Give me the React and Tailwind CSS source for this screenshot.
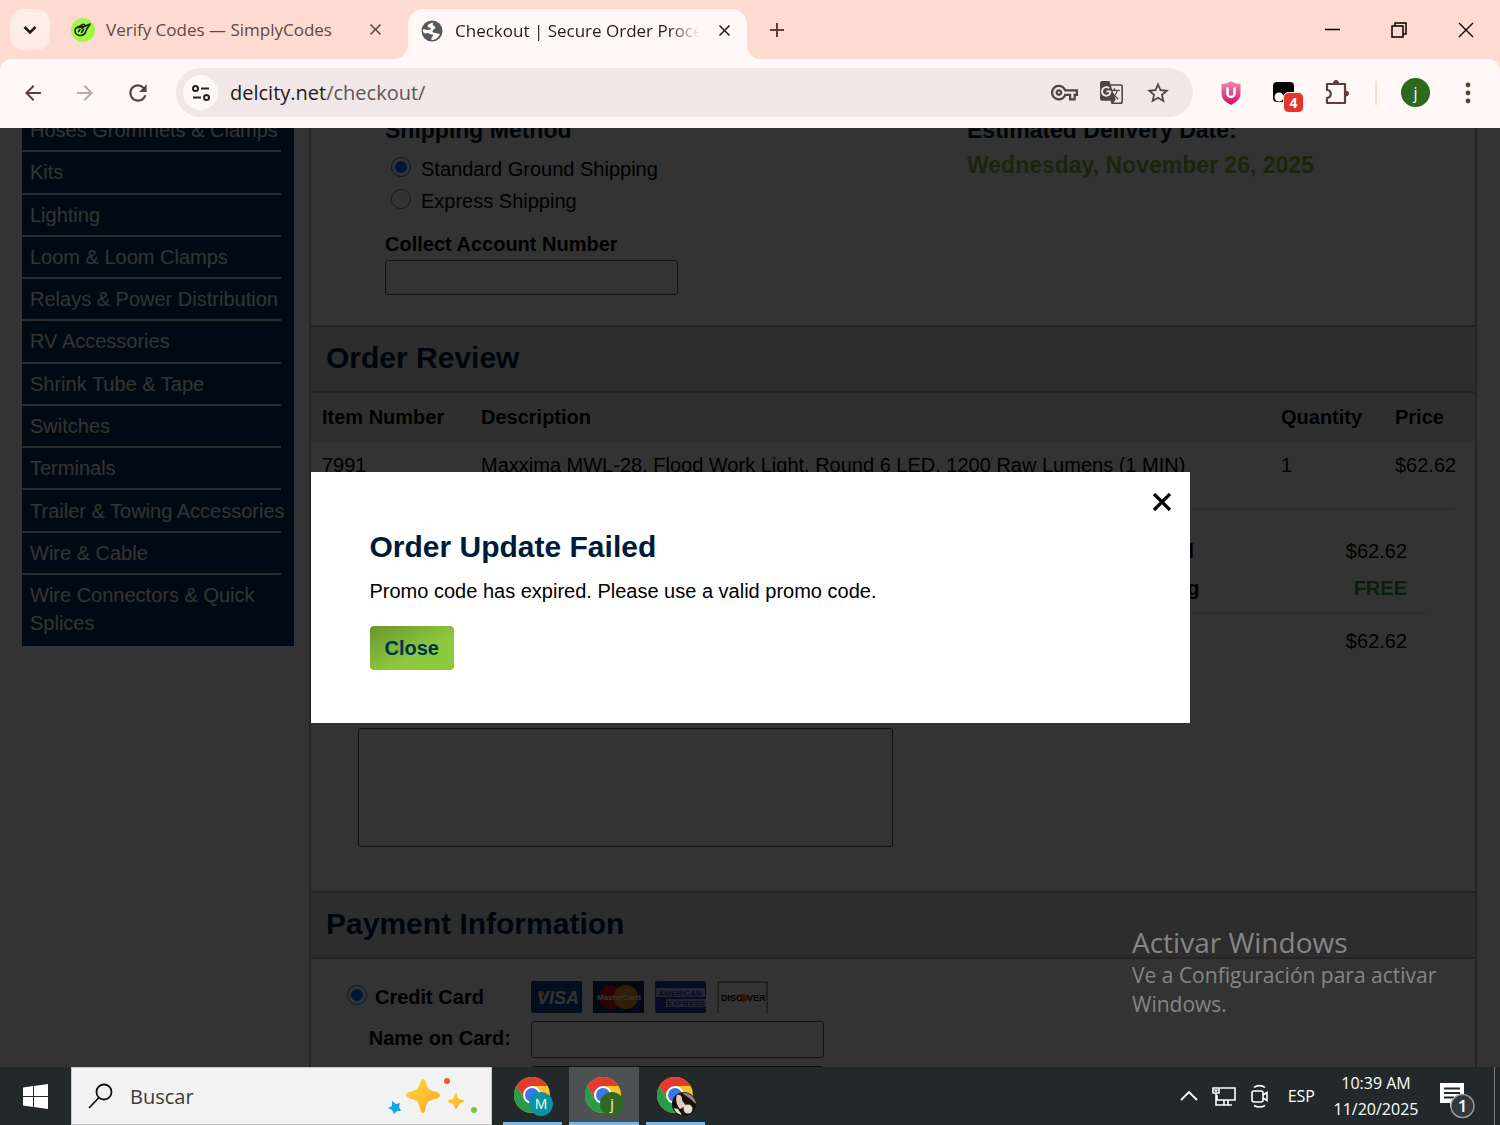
import React from "react";
import {
    MdAdd,
    MdArrowBack,
    MdArrowForward,
    MdClose,
    MdGTranslate,
    MdOutlineVpnKey,
    MdRefresh,
    MdStarBorder,
} from "react-icons/md";

const categories = [
    "Hoses Grommets & Clamps",
    "Kits",
    "Lighting",
    "Loom & Loom Clamps",
    "Relays & Power Distribution",
    "RV Accessories",
    "Shrink Tube & Tape",
    "Switches",
    "Terminals",
    "Trailer & Towing Accessories",
    "Wire & Cable",
];

function TabFlare({ flip }) {
    return (
        <svg
            className={`h-[14px] w-[14px] self-end text-[#fff8f6] ${flip ? "-scale-x-100" : ""}`}
            viewBox="0 0 14 14"
            fill="currentColor"
        >
            <path d="M14 0v14H0A14 14 0 0 0 14 0z" />
        </svg>
    );
}

function TabStrip() {
    return (
        <div className="flex h-[59px] items-center bg-[#ffdad0] text-[17px]">
            <button
                aria-label="Search tabs"
                className="ml-[10px] flex h-[41px] w-10 items-center justify-center rounded-[14px] bg-[#ffece6]"
            >
                <svg className="h-4 w-4" viewBox="0 0 16 16" fill="none" stroke="#1a1a1a" strokeWidth="2.600">
                    <path d="M2.500 5l5.500 5.500L13.500 5" />
                </svg>
            </button>

            <div className="ml-[21px] flex w-[323px] items-center text-[#5c4a45]">
                <svg className="h-6 w-6" viewBox="0 0 24 24" fill="none">
                    <circle cx="12" cy="12" r="12" fill="#a5f545" />
                    <g stroke="#12240a" strokeWidth="1.600" strokeLinejoin="round" strokeLinecap="round">
                        <path d="M5 10l7-3.500c1.500-.7 2.500 1 1.500 2L11 10.500M13.500 8.500L19 6l-3.500 5.500c-1 4-3 6-6 6C6.500 17.500 4 15.500 4 12.500c0-1 .3-1.800 1-2.500z" />
                        <path d="M9 11.500l-1.500 2M12.500 11.500l-2 3" />
                    </g>
                </svg>
                <span className="ml-[11px] flex-1 whitespace-nowrap">Verify Codes — SimplyCodes</span>
                <button aria-label="Close tab" className="mr-[9px]">
                    <MdClose className="h-[19px] w-[19px]" />
                </button>
            </div>

            <TabFlare />
            <div className="flex h-[50px] w-[339px] items-center self-end rounded-t-[15px] bg-[#fff8f6] pb-[7px] text-[#241d1b]">
                <svg className="ml-[13px] h-[22px] w-[22px]" viewBox="0 0 22 22">
                    <circle cx="11" cy="11" r="10.500" fill="#54585c" />
                    <path
                        d="M12.500 2.500c-3 .5-6 2-6 4 0 1.500 2 1 3 1.500 1 1-1 2-3 2-2 0-3-1-4.500-.5C1.500 12 2.500 13 4 13.500c1.500 0 2.500-1 4 0 1 .7 2 1 3.500 1 1.500.3.500 1.500-.5 2.500-.5 1-1 2-.5 3 4 .2 7-2.500 8.500-6-1.500 0-2.500-1-4-1s-3.500 0-3.500-1.500S13 9 14 8.500c1-.7 0-2-1-2.500s-2-2-.5-3.500z"
                        fill="#fff8f6"
                    />
                </svg>
                <span className="ml-[12px] w-[244px] overflow-hidden whitespace-nowrap [mask-image:linear-gradient(to_right,black_88%,transparent)]">
                    Checkout | Secure Order Processing
                </span>
                <button aria-label="Close tab" className="ml-4">
                    <MdClose className="h-[19px] w-[19px]" />
                </button>
            </div>
            <TabFlare flip />
            <button aria-label="New tab" className="ml-1 text-[#5c4038]">
                <MdAdd className="h-6 w-6" />
            </button>

            <div className="ml-auto mr-px flex text-black">
                <button aria-label="Minimize" className="flex w-[67px] justify-center">
                    <svg className="h-4 w-4" viewBox="0 0 16 16" fill="none" stroke="currentColor">
                        <path d="M1 7.500h15" strokeWidth="1.500" />
                    </svg>
                </button>
                <button aria-label="Restore" className="flex w-[67px] justify-center">
                    <svg className="h-4 w-4" viewBox="0 0 16 16" fill="none" stroke="currentColor" strokeWidth="1.500">
                        <path d="M1 4h11v11H1zM4 4V1h11v11h-3" />
                    </svg>
                </button>
                <button aria-label="Close window" className="flex w-[67px] justify-center">
                    <svg className="h-4 w-4" viewBox="0 0 16 16" fill="none" stroke="currentColor" strokeWidth="1.300">
                        <path d="M1 1l14 14M15 1L1 15" />
                    </svg>
                </button>
            </div>
        </div>
    );
}

function Toolbar() {
    return (
        <div className="bg-[#ffdad0]">
            <div className="flex h-[69px] items-center rounded-t-xl bg-[#fff8f6] pb-[2px] pl-[21px] pr-5 text-[#5c4038]">
                <div className="mr-[25px] flex items-center gap-7">
                    <button aria-label="Back">
                        <MdArrowBack className="h-6 w-6" />
                    </button>
                    <button aria-label="Forward" className="text-[#b5aca9]">
                        <MdArrowForward className="h-6 w-6" />
                    </button>
                    <button aria-label="Reload">
                        <MdRefresh className="h-[26px] w-[26px]" />
                    </button>
                </div>

                <div className="flex h-[49px] flex-1 items-center rounded-full bg-[#f1e6e8] pl-[7px] pr-[22px] text-[#4d4444]">
                    <button
                        aria-label="Site information"
                        className="flex h-[35px] w-[35px] items-center justify-center rounded-full bg-[#fff8f6]"
                    >
                        <svg className="h-5 w-5" viewBox="0 0 20 20" fill="none" stroke="#222" strokeWidth="2">
                            <circle cx="4.500" cy="5.500" r="2.500" />
                            <path d="M10 5.500h8M2 14.500h8" />
                            <circle cx="15.500" cy="14.500" r="2.500" />
                        </svg>
                    </button>
                    <p className="ml-3 flex-1 text-[20px] text-[#5e5557]">
                        <span className="text-[#1f1a1a]">delcity.net</span>/checkout/
                    </p>
                    <div className="flex items-center gap-[21px]">
                        <button aria-label="Passwords">
                            <MdOutlineVpnKey className="h-[27px] w-[27px]" />
                        </button>
                        <button aria-label="Translate this page">
                            <MdGTranslate className="h-[25px] w-[25px]" />
                        </button>
                        <button aria-label="Bookmark this page">
                            <MdStarBorder className="h-[26px] w-[26px]" />
                        </button>
                    </div>
                </div>

                <button aria-label="Ad blocker" className="ml-[11px] flex w-[53px] justify-center">
                    <svg className="h-6 w-5" viewBox="0 0 20 24">
                        <defs>
                            <linearGradient id="shield" x1="0" y1="0" x2="0" y2="1">
                                <stop offset="0" stopColor="#f48bb5" />
                                <stop offset="1" stopColor="#c9105f" />
                            </linearGradient>
                        </defs>
                        <path d="M10 0c3 2 6 3 9.500 3v9c0 6-4 9-9.500 12C4.500 21 .5 18 .5 12V3C4 3 7 2 10 0z" fill="url(#shield)" />
                        <path d="M6.500 6.500v6a3.500 3.500 0 0 0 7 0v-6" fill="none" stroke="#fff" strokeWidth="2.500" />
                    </svg>
                </button>
                <button aria-label="User scripts" className="flex w-[53px] justify-center pl-[10px]">
                    <svg className="h-[42px] w-8" viewBox="0 0 32 42">
                        <rect x="0" y="10" width="21" height="20" rx="4" fill="#000" />
                        <circle cx="6" cy="25" r="4.500" fill="#fff" />
                        <circle cx="16" cy="25" r="4.500" fill="#fff" />
                        <rect x="10.500" y="20.500" width="20" height="20" rx="5" fill="#e8322f" stroke="#fff8f6" />
                        <text
                            x="20.500"
                            y="36"
                            textAnchor="middle"
                            fill="#fff"
                            className="font-['Open_Sans',sans-serif] text-[14px] font-bold"
                        >
                            4
                        </text>
                    </svg>
                </button>
                <button aria-label="Extensions" className="flex w-[53px] justify-center">
                    <svg className="h-[26px] w-[26px]" viewBox="0 0 26 26" fill="none" stroke="currentColor" strokeWidth="2.200" strokeLinejoin="round">
                        <path d="M3 4h18v19H3v-5c5-.5 5-7.500 0-8z" />
                        <path d="M9.500 3a2.500 2.500 0 0 1 5 0zM22 11a2.500 2.500 0 0 1 0 5z" fill="currentColor" strokeWidth="1" />
                    </svg>
                </button>
                <span className="ml-3 h-6 w-[2px] bg-[#ffdad0]" />
                <button
                    aria-label="Profile"
                    className="ml-6 flex h-[29px] w-[29px] items-center justify-center rounded-full bg-[#2b6a1c] text-[16px] leading-none text-white"
                >
                    j
                </button>
                <button aria-label="Menu" className="ml-[26px]">
                    <svg className="h-6 w-6" viewBox="0 0 24 24" fill="currentColor">
                        <circle cx="12" cy="4" r="2.400" />
                        <circle cx="12" cy="12" r="2.400" />
                        <circle cx="12" cy="20" r="2.400" />
                    </svg>
                </button>
            </div>
        </div>
    );
}

function Sidebar() {
    return (
        <nav className="w-[272px] flex-none bg-[#003366] text-white">
            <ul className="flex h-[536px] flex-col">
                {categories.map((name) => (
                    <li key={name} className="mr-[13px] flex flex-1 items-center whitespace-nowrap border-b-2 border-white/80 pl-2">
                        <a href="#">{name}</a>
                    </li>
                ))}
                <li className="h-[71px] pl-2 pr-5 pt-[6px]">
                    <a href="#">Wire Connectors & Quick Splices</a>
                </li>
            </ul>
        </nav>
    );
}

function SectionHeader({ children }) {
    return (
        <h2 className="flex h-[68px] items-center border-y-2 border-[#bbb] bg-[#e1e1e1] px-[15px] pb-[2px] text-[30px] font-bold text-[#002147]">
            {children}
        </h2>
    );
}

function Shipping() {
    return (
        <section className="flex pb-[30px] pl-[74px] pt-[6px]">
            <div className="w-[582px]">
                <h3 className="text-[23px] font-bold text-[#001a33]">Shipping Method</h3>
                <div className="mt-[9px] flex flex-col pl-[6px]">
                    <label className="flex h-8 items-center">
                        <input type="radio" name="ship" defaultChecked className="mb-1 mr-[10px] h-5 w-5" />
                        Standard Ground Shipping
                    </label>
                    <label className="flex h-8 items-center">
                        <input type="radio" name="ship" className="mb-1 mr-[10px] h-5 w-5" />
                        Express Shipping
                    </label>
                </div>
                <label htmlFor="account" className="mt-[13px] block font-bold">
                    Collect Account Number
                </label>
                <input
                    id="account"
                    className="mt-[2px] block h-[35px] w-[293px] rounded-[3px] border border-[#555] bg-white px-2"
                />
            </div>
            <div className="text-[23px] font-bold">
                <h3 className="text-[#001a33]">Estimated Delivery Date:</h3>
                <p className="mt-[7px] text-[#84bb3c]">Wednesday, November 26, 2025</p>
            </div>
        </section>
    );
}

function OrderReview() {
    return (
        <section>
            <SectionHeader>Order Review</SectionHeader>
            <table className="w-full text-left">
                <thead className="bg-[#ebebeb]">
                    <tr className="h-[49px]">
                        <th className="w-[170px] pb-[2px] pl-[11px]">Item Number</th>
                        <th className="pb-[2px]">Description</th>
                        <th className="w-[114px] pb-[2px]">Quantity</th>
                        <th className="w-[80px] pb-[2px]">Price</th>
                    </tr>
                </thead>
                <tbody>
                    <tr className="h-[66px] align-top">
                        <td className="pl-[11px] pt-[9px]">7991</td>
                        <td className="pt-[9px]">Maxxima MWL-28, Flood Work Light, Round 6 LED, 1200 Raw Lumens (1 MIN)</td>
                        <td className="pt-[9px]">1</td>
                        <td className="pt-[9px]">$62.62</td>
                    </tr>
                </tbody>
            </table>
            <hr className="mx-5 border-t-2 border-[#e6e6e6]" />

            <dl className="ml-auto mr-[48px] mt-[22px] w-[337px]">
                <div className="flex h-[37px] items-center justify-between pl-6 pr-5">
                    <dt className="font-bold">Subtotal</dt>
                    <dd>$62.62</dd>
                </div>
                <div className="flex h-[37px] items-center justify-between pl-6 pr-5">
                    <dt className="font-bold">Shipping</dt>
                    <dd className="font-bold text-[#32963e]">FREE</dd>
                </div>
                <div className="mt-[6px] flex h-[49px] items-end justify-between border-t-2 border-[#e6e6e6] pb-[6px] pl-6 pr-5">
                    <dt className="font-bold">Total</dt>
                    <dd>$62.62</dd>
                </div>
            </dl>

            <textarea
                aria-label="Order comments"
                className="mb-11 ml-[47px] mt-[67px] block h-[119px] w-[535px] resize-none rounded-[3px] border border-[#555] bg-white"
            />
        </section>
    );
}

function CardLogos() {
    return (
        <div className="flex gap-[11px]">
            <svg className="h-8 w-[51px]" viewBox="0 0 51 32">
                <rect width="51" height="32" rx="2" fill="#12479b" />
                <text x="27" y="23" textAnchor="middle" fill="#fff" className="text-[18px] font-bold italic">
                    VISA
                </text>
                <path d="M7 10h5l2 6z" fill="#e8b64a" />
            </svg>
            <svg className="h-8 w-[51px]" viewBox="0 0 51 32">
                <rect width="51" height="32" fill="#0d2c66" />
                <circle cx="18" cy="16" r="12" fill="#e0131e" />
                <circle cx="33" cy="16" r="12" fill="#f59b1c" />
                <text x="26" y="19" textAnchor="middle" fill="#fff" className="text-[8px] font-bold">
                    MasterCard
                </text>
            </svg>
            <svg className="h-8 w-[51px]" viewBox="0 0 51 32">
                <rect width="51" height="32" rx="2" fill="#1f3fc4" />
                <rect x="1" y="7" width="49" height="9" fill="#b9c4ee" />
                <rect x="11" y="18" width="40" height="8" fill="#b9c4ee" />
                <text x="25" y="15" textAnchor="middle" fill="#1f3fc4" className="text-[8px] font-bold">
                    AMERICAN
                </text>
                <text x="31" y="25" textAnchor="middle" fill="#1f3fc4" className="text-[8px] font-bold">
                    EXPRESS
                </text>
            </svg>
            <svg className="h-8 w-[51px]" viewBox="0 0 51 32">
                <path d="M1 32V1h49v31" fill="#fff" stroke="#8a8a8a" strokeWidth="1.500" />
                <circle cx="27" cy="17" r="4" fill="#f08020" />
                <text x="4" y="20" fill="#000" className="text-[9px] font-bold">
                    DISC
                </text>
                <text x="30" y="20" fill="#000" className="text-[9px] font-bold">
                    VER
                </text>
            </svg>
        </div>
    );
}

function Payment() {
    return (
        <section>
            <SectionHeader>Payment Information</SectionHeader>
            <div className="grid grid-cols-[200px_293px] gap-x-5 pt-[22px] font-bold">
                <label className="flex h-[32px] items-center pl-9">
                    <input type="radio" name="pay" defaultChecked className="mb-1 mr-2 h-5 w-5" />
                    Credit Card
                </label>
                <CardLogos />
                <label htmlFor="holder" className="mt-2 flex h-[37px] items-center justify-end pb-1">
                    Name on Card:
                </label>
                <input id="holder" className="mt-2 h-[37px] rounded-[3px] border border-[#555] bg-white px-2" />
                <span />
                <input aria-label="Card number" className="mt-2 h-[37px] rounded-[3px] border border-[#555] bg-white px-2" />
            </div>
        </section>
    );
}

function FailedDialog() {
    return (
        <div className="absolute inset-0 flex items-center justify-center bg-black/80">
            <div role="dialog" aria-labelledby="failed-title" className="w-[879px] max-w-full bg-white pb-[53px] pt-4">
                <div className="flex justify-end pr-[15px]">
                    <button aria-label="Close dialog">
                        <svg className="h-[26px] w-[26px]" viewBox="0 0 26 26" stroke="#000" strokeWidth="3.200">
                            <path d="M5 6l16 16M21 6L5 22" />
                        </svg>
                    </button>
                </div>
                <div className="px-[59px] pt-[13px]">
                    <h2 id="failed-title" className="text-[30px] font-bold leading-10 text-[#001a3a]">
                        Order Update Failed
                    </h2>
                    <p className="mt-[10px]">Promo code has expired. Please use a valid promo code.</p>
                    <button className="mt-[21px] h-11 rounded-[4px] bg-linear-to-br from-[#6b942f] to-[#8dc93e] to-60% px-[15px] font-bold text-[#003350]">
                        Close
                    </button>
                </div>
            </div>
        </div>
    );
}

function ChromeIcon({ children }) {
    return (
        <svg className="ml-[2px] mt-1 h-10 w-10" viewBox="0 0 40 40">
            <circle cx="18" cy="18" r="18" fill="#f9c32c" />
            <path d="M18 9h15.600A18 18 0 0 0 2.400 9l7.800 13.500z" fill="#e33b2e" />
            <path d="M2.400 9A18 18 0 0 0 18 36l7.800-13.500L18 27l-7.800-4.500z" fill="#2a9b48" />
            <circle cx="18" cy="18" r="9" fill="#fff" />
            <circle cx="18" cy="18" r="7" fill="#3b78e7" />
            {children}
        </svg>
    );
}

function BadgeText({ fill, children }) {
    return (
        <>
            <circle cx="27" cy="27" r="12" fill={fill} />
            <text x="27" y="32" textAnchor="middle" fill="#fff" className="text-[14px]">
                {children}
            </text>
        </>
    );
}

function Taskbar() {
    return (
        <footer className="flex h-[58px] flex-none items-stretch bg-[#23282a] text-white">
            <button aria-label="Start" className="flex w-[71px] items-center justify-center">
                <svg className="h-[25px] w-[25px]" viewBox="0 0 25 25" fill="currentColor">
                    <path d="M0 3.500l10-1.400V12H0zM11 2l14-2v12H11zM0 13h10v9.900L0 21.500zM11 13h14v12l-14-2z" />
                </svg>
            </button>
            <label className="flex w-[421px] items-center border border-[#c8c8c8] bg-[#f2f2f2] pl-4 pr-3 text-[#333]">
                <svg className="h-[26px] w-[26px]" viewBox="0 0 26 26" fill="none" stroke="#111" strokeWidth="1.800">
                    <circle cx="16" cy="9" r="7.500" />
                    <path d="M11 14.500L1 25" />
                </svg>
                <input
                    aria-label="Buscar"
                    placeholder="Buscar"
                    className="ml-4 min-w-0 flex-1 bg-transparent pt-[2px] text-[20px] placeholder:text-[#3a3a3a]"
                />
                <svg className="h-[42px] w-[92px]" viewBox="0 0 92 42">
                    <defs>
                        <linearGradient id="spark" x1="0" y1="0" x2="1" y2="1">
                            <stop offset="0" stopColor="#ffd83d" />
                            <stop offset="1" stopColor="#f7a823" />
                        </linearGradient>
                    </defs>
                    <path
                        d="M36 4c3 0 3 5 5 9s12 3 12 7-9 4-12 7-2 11-5 11-3-8-5-11-12-3-12-7 9-3 12-7 2-9 5-9z"
                        fill="url(#spark)"
                    />
                    <path d="M69 18c1.500 0 1.500 5 3 6s5 .5 5 2-4 1.500-5 3-1.500 5-3 5-1.500-4-3-5-5-1-5-3 4-1 5-2 1.500-6 3-6z" fill="url(#spark)" />
                    <path d="M5 26l4 3 4-1-1 4 2 4-4 0-3 3-2-4-4-2 4-2z" fill="#16a5e8" />
                    <circle cx="60" cy="6" r="3" fill="#e8602c" />
                    <circle cx="87" cy="35" r="3" fill="#7cbf4a" />
                </svg>
            </label>

            <button aria-label="Chrome, profile M" className="ml-[11px] flex w-[59px] items-center justify-center border-b-[3px] border-[#76b5e5]">
                <ChromeIcon>
                    <BadgeText fill="#0b93a3">M</BadgeText>
                </ChromeIcon>
            </button>
            <button aria-label="Chrome, profile j" className="ml-[7px] flex w-[70px] items-center justify-center border-b-[3px] border-[#76b5e5] bg-[#4c5153]">
                <ChromeIcon>
                    <BadgeText fill="#2f6a20">j</BadgeText>
                </ChromeIcon>
            </button>
            <button aria-label="Chrome, photo profile" className="ml-[7px] flex w-[59px] items-center justify-center border-b-[3px] border-[#76b5e5]">
                <ChromeIcon>
                    <circle cx="27" cy="27" r="12" fill="#17120f" />
                    <path d="M25 16a12 12 0 0 1 14 11l-7-6z" fill="#8b8780" />
                    <path d="M20 18c3-1 5 1 5 4s3 4 4 7l-6 3c-3-3-5-9-3-14z" fill="#e9cbb8" />
                    <circle cx="31" cy="32" r="4.500" fill="#dfe0cd" />
                    <path d="M17 31l4 1 4 6c-4-1-7-3-8-7z" fill="#e6dcd0" />
                </ChromeIcon>
            </button>

            <div className="ml-auto flex items-center">
                <button aria-label="Show hidden icons">
                    <svg className="h-[18px] w-[18px]" viewBox="0 0 18 18" fill="none" stroke="currentColor" strokeWidth="1.800">
                        <path d="M1 13l8-8 8 8" />
                    </svg>
                </button>
                <svg className="ml-[14px] h-6 w-6" viewBox="0 0 24 24" fill="none" stroke="currentColor" strokeWidth="1.600">
                    <path d="M8 4h15v12H5v-5M12 16v5M16 16v5M8 21h12M1 4h6v5H1zM4 9v12h4M2.500 5.500L4 7l1.500-1.500" />
                </svg>
                <svg className="ml-3 h-6 w-6" viewBox="0 0 24 24" fill="none" stroke="currentColor" strokeWidth="1.600">
                    <rect x="4" y="7" width="11" height="11" rx="2" />
                    <path d="M15 11l4-2.500v8L15 14M6 3.500c3-2.500 8-2.500 11 0M6 21.500c3 2 8 2 11 0" />
                </svg>
                <span className="ml-4 text-[16px]">ESP</span>
                <div className="ml-[18px] w-[86px] whitespace-nowrap text-center text-[16px] leading-[26px]">
                    <p>10:39 AM</p>
                    <p>11/20/2025</p>
                </div>
                <button aria-label="Notifications" className="ml-5">
                    <svg className="mt-[8px] h-10 w-9" viewBox="0 0 36 40">
                        <path d="M1 3h24v20h-9l-5 5v-5H1z" fill="#fff" />
                        <path d="M5 8.500h16M5 13h16M5 17.500h10" stroke="#23282a" strokeWidth="1.800" />
                        <circle cx="23.500" cy="26" r="11.500" fill="#33383a" stroke="#9a9a9a" strokeWidth="1.500" />
                        <text x="23.500" y="32" textAnchor="middle" fill="#fff" className="text-[17px] font-semibold">
                            1
                        </text>
                    </svg>
                </button>
                <span className="ml-[19px] mr-[5px] h-[58px] w-px bg-[#7a7d7e]" />
            </div>
        </footer>
    );
}

export default function App() {
    return (
        <div className="flex h-screen flex-col overflow-hidden font-['Open_Sans',sans-serif]">
            <TabStrip />
            <Toolbar />

            <div className="relative min-h-0 flex-1 overflow-hidden bg-white font-['Liberation_Sans',Arial,sans-serif] text-[20px] leading-7 text-black">
                <div className="-mt-[18px] flex items-start gap-[15px] pl-[22px] pr-[23px]">
                    <Sidebar />
                    <main className="min-w-0 flex-1 border-x-2 border-[#bbb] pb-8">
                        <Shipping />
                        <OrderReview />
                        <Payment />
                    </main>
                </div>
                <FailedDialog />

                <div className="pointer-events-none absolute bottom-[48px] right-[48px] w-[320px] font-['Open_Sans',sans-serif] text-[#858585]">
                    <p className="text-[28px] leading-[38px]">Activar Windows</p>
                    <p className="text-[21px] leading-[29px]">Ve a Configuración para activar Windows.</p>
                </div>
            </div>

            <Taskbar />
        </div>
    );
}
